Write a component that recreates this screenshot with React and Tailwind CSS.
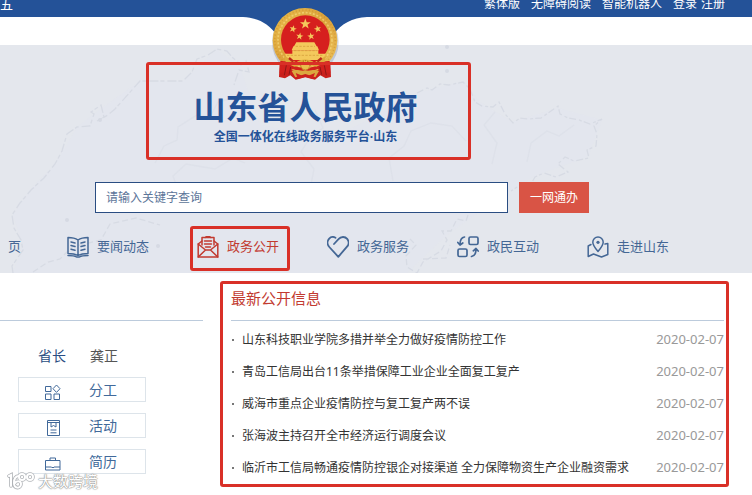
const topLinks = ["繁体版", "无障碍阅读", "智能机器人"];

const news = [
  { title: "山东科技职业学院多措并举全力做好疫情防控工作", date: "2020-02-07" },
  { title: "青岛工信局出台11条举措保障工业企业全面复工复产", date: "2020-02-07" },
  { title: "威海市重点企业疫情防控与复工复产两不误", date: "2020-02-07" },
  { title: "张海波主持召开全市经济运行调度会议", date: "2020-02-07" },
  {
    title: "临沂市工信局畅通疫情防控银企对接渠道 全力保障物资生产企业融资需求",
    date: "2020-02-07",
  },
];

const NavIcon = ({ children }) => (
  <svg
    viewBox="0 0 22 22"
    className="h-[22px] w-[22px] shrink-0"
    fill="none"
    stroke="currentColor"
    strokeWidth="1.5"
    strokeLinejoin="round"
    strokeLinecap="round"
    aria-hidden="true"
  >
    {children}
  </svg>
);

const BookIcon = () => (
  <NavIcon>
    <path d="M11 4C8 2 4.500 1.600 1 1.600V17.400C4.500 17.400 8 17.800 11 19.400C14 17.800 17.500 17.400 21 17.400V1.600C17.500 1.600 14 2 11 4ZM11 4V19" />
    <path d="M1 19.600C5 19.600 8 20 9.500 21H12.500C14 20 17 19.600 21 19.600" />
    <path d="M4 6L8 7M4 9.600L8 10.600M4 13.200L8 14.200M18 6L14 7M18 9.600L14 10.600M18 13.200L14 14.200" />
  </NavIcon>
);

const MailIcon = () => (
  <NavIcon>
    <path d="M5 9V1.600H17V9M8 1.600L9 .8H13L14 1.600" />
    <path d="M5 5L1.200 8V21H20.800V8L17 5" />
    <path d="M1.200 8L8.500 14H13.500L20.800 8M1.200 21L8.500 14M20.800 21L13.500 14" />
    <path d="M7.500 5H14.500M7.500 8H14.500M8.500 11H13.500" />
  </NavIcon>
);

const HeartIcon = () => (
  <NavIcon>
    <path
      strokeWidth="1.800"
      d="M7 8L11.500 3.200C14 .3 18 .3 20.200 2.900C22.100 5.300 21.900 8.600 20 10.700L11.300 20.800L2.300 11C-.1 8.300 .2 4.800 2.200 2.600C4 .7 6.500 .6 8.500 1.700"
    />
  </NavIcon>
);

const ExchangeIcon = () => (
  <NavIcon>
    <g strokeWidth="1.700">
      <rect x="12" y="1" width="9" height="7.500" rx="1.500" />
      <rect x="1" y="13" width="9" height="7.500" rx="1.500" />
      <path d="M7.500 1C4.500 1.500 3 4 3 8.500M.8 6.500L3 9L5.800 7" />
      <path d="M14.500 20.500C17.500 20 19 17.500 19 13M16.300 14.800L19 12.500L21.200 15" />
    </g>
  </NavIcon>
);

const MapIcon = () => (
  <NavIcon>
    <path d="M11 15.500C8 12 5.800 9.500 5.800 6.300C5.800 3.200 8.200 1 11 1C13.800 1 16.200 3.200 16.200 6.300C16.200 9.500 14 12 11 15.500Z" />
    <circle cx="11" cy="6.300" r="1.600" fill="currentColor" stroke="none" />
    <path d="M4 8.500L1.200 10V20.500L6.500 18L14.500 21L20.800 18.500V7.500L18 8" />
  </NavIcon>
);

const navItems = [
  { label: "要闻动态", icon: BookIcon },
  { label: "政务公开", icon: MailIcon, active: true },
  { label: "政务服务", icon: HeartIcon },
  { label: "政民互动", icon: ExchangeIcon },
  { label: "走进山东", icon: MapIcon },
];

const SideIcon = ({ children }) => (
  <svg
    viewBox="0 0 16 16"
    className="mt-1 h-4 w-4 shrink-0"
    fill="none"
    stroke="currentColor"
    strokeWidth="1"
    aria-hidden="true"
  >
    {children}
  </svg>
);

const sideItems = [
  {
    label: "分工",
    icon: (
      <SideIcon>
        <path d="M.5 2.500H6V7.500H.5ZM.5 10H6V15.500H.5ZM9 10H14.500V15.500H9ZM11.500 1L15 4.700L11.500 8.400L8 4.700Z" />
      </SideIcon>
    ),
  },
  {
    label: "活动",
    icon: (
      <SideIcon>
        <path d="M2.500 .5H14.500V15.500H2.500ZM2.500 2.500H14.500M6 2.500V7L8.500 5.500L11 7V2.500M5.500 10H11.500M5.500 12.800H11.500" />
      </SideIcon>
    ),
  },
  {
    label: "简历",
    icon: (
      <SideIcon>
        <path d="M.5 4.500H15V14H.5ZM5 4.500V2H10.500V4.500M.5 11H6.500M9 11H15M6.500 11.500H9" />
      </SideIcon>
    ),
  },
];

const star = "M0 -10L2.400 -3.200L9.500 -3.100L3.800 1.200L5.900 8.100L0 4L-5.900 8.100L-3.800 1.200L-9.500 -3.100L-2.400 -3.200Z";

const Emblem = () => (
  <svg
    viewBox="0 0 240 225"
    className="absolute left-[265px] top-[5px] h-[75px] w-20"
    role="img"
    aria-label="国徽"
  >
    <defs>
      <linearGradient id="gold" x1="0" y1="0" x2="1" y2="1">
        <stop offset="0" stopColor="#e9bd4c" />
        <stop offset="0.5" stopColor="#dba13a" />
        <stop offset="1" stopColor="#efc65c" />
      </linearGradient>
    </defs>
    <ellipse cx="121" cy="111" rx="100" ry="102" fill="#1e3a6b" opacity="0.18" />
    <path d="M44 172L42 216L60 220L76 211L92 224L121 217L150 224L166 211L182 220L198 216L196 172Z" fill="#c9201c" />
    <ellipse cx="120" cy="106" rx="97" ry="97" fill="url(#gold)" />
    <ellipse cx="120" cy="106" rx="91" ry="91" fill="none" stroke="#c58a2a" strokeWidth="5" strokeDasharray="3 7" opacity="0.5" />
    <ellipse cx="120" cy="105" rx="81" ry="82" fill="none" stroke="#f8df86" strokeWidth="5" strokeDasharray="6 5" opacity="0.6" />
    <circle cx="121" cy="104" r="73" fill="#d61f1e" />
    <g fill="#f4c95c">
      <path d={star} transform="translate(121 57) scale(1.7)" />
      <path d={star} transform="translate(84 72) rotate(15) scale(1.15)" />
      <path d={star} transform="translate(158 72) rotate(-15) scale(1.15)" />
      <path d={star} transform="translate(104 94) rotate(10) scale(1.15)" />
      <path d={star} transform="translate(138 94) rotate(-10) scale(1.15)" />
      <path d="M94 112H148L155 124H87ZM85 124H157L162 136H80Z" />
      <path d="M82 136H160V146H82ZM60 146H182L174 165H67Z" />
    </g>
    <path d="M92 124H150M87 137H155M66 151H176" stroke="#d09736" strokeWidth="2" strokeDasharray="7 4" />
    <path d="M46 168C68 166 76 178 92 184C110 190 132 190 150 184C166 178 174 166 194 168L196 204L178 202L158 192L121 205L84 192L64 202L44 204Z" fill="#d1211d" />
    <path d="M56 153C72 158 80 170 92 173C108 160 133 160 149 173C162 170 170 158 184 153L177 174L154 185L121 176L88 185L64 174Z" fill="#deab3d" />
    <path d="M85 170L72 159M157 170L170 159" stroke="#bd2a1b" strokeWidth="7" />
    <circle cx="121" cy="181" r="14" fill="#e9bd4c" stroke="#bd7520" strokeWidth="4" strokeDasharray="4 3" />
    <path d="M64 181L58 211M77 186L72 209M165 186L170 209M178 181L184 211" stroke="#8f1716" strokeWidth="3" />
    <path d="M80 198C97 190 105 200 121 196C137 200 145 190 162 198L151 217L121 207L91 217Z" fill="#dba83f" />
    <path d="M92 204L121 216L150 204L143 222L121 215L99 222Z" fill="#cf221d" />
  </svg>
);

const MapBackdrop = () => (
  <svg
    viewBox="0 0 752 228"
    className="pointer-events-none absolute left-0 top-0 h-[228px] w-[752px]"
    fill="none"
    stroke="#d7dbe4"
    strokeWidth="1.3"
    aria-hidden="true"
  >
    <path
      fill="#e2e6ee"
      stroke="none"
      opacity="0.7"
      d="M55 119L77 82L95 68L140 36L183 36L217 4L240 22L260 80L330 95L417 48L463 36L480 57L512 77L558 63L602 75L588 112L537 130L510 145L447 190L407 228H13L23 200L13 170L30 145Z"
    />
    <path
      strokeDasharray="9 2 4 3"
      d="M13 228L12 221L23 205L21 195L14 183L12 170L20 158L31 145L44 133L55 119L62 106L67 89L77 82L90 81L94 69L91 67L101 60L104 72L97 76L108 70L115 64L140 36L183 36L192 27L197 14L208 10L217 4L227 6L232 12L241 20L246 16L249 27L239 25L234 40"
    />
    <path
      strokeDasharray="7 3 3 2"
      d="M417 48L427 43L432 45L440 39L449 40L463 37L470 44L475 57L482 61L493 62L499 57L505 69L513 78L520 73L528 74L541 73L551 66L558 61L560 69L568 73L579 75L590 79L602 74L594 81L597 89L596 101L587 105L589 113L574 116L565 112L558 119L568 127L556 132L544 128L535 132L531 139L520 140L511 146"
    />
    <path
      strokeDasharray="6 3"
      d="M468 170L466 176L457 174L451 186L442 186L447 195L441 206L423 217L417 228L407 222L406 211L416 200L410 194M423 214L446 213L450 200M33 227L48 217L60 214L72 202L101 195L110 179L136 173L160 180"
    />
    <path
      opacity="0.45"
      d="M155 118L164 101L177 95L178 82L197 70L210 72L218 57L244 50M178 145L173 131L186 119L215 124L233 113L245 118M310 145L314 124L301 107L311 91L323 83L315 65M393 136L389 113L404 101L411 86L431 78L452 81L466 96M492 119L497 98L484 80L495 67M527 117L531 98L547 86L559 91L574 80"
    />
    <g fill="#d6dae3" stroke="none">
      <circle cx="67" cy="175" r="2" />
      <circle cx="100" cy="75" r="2" />
      <circle cx="158" cy="201" r="2" />
      <circle cx="447" cy="2" r="2" />
      <circle cx="447" cy="26" r="2" />
    </g>
  </svg>
);

const Watermark = () => (
  <div className="absolute bottom-1 left-[7px] flex items-center gap-[3px]">
    <svg viewBox="0 0 28 18" className="h-[18px] w-7" fill="none" aria-hidden="true">
      <g stroke="#b0b3b7" strokeWidth="3.6" strokeLinecap="round">
        <path d="M2 4L4 3V14M12 4C8 4 7 8 7 11C7 17 14 17 14 12C14 8 9 9 8 11" />
        <circle cx="15" cy="5" r="3" />
        <circle cx="23" cy="5" r="3" />
      </g>
      <g stroke="#fff" strokeWidth="2" strokeLinecap="round">
        <path d="M2 4L4 3V14M12 4C8 4 7 8 7 11C7 17 14 17 14 12C14 8 9 9 8 11" />
        <circle cx="15" cy="5" r="3" />
        <circle cx="23" cy="5" r="3" />
      </g>
    </svg>
    <span className="text-[15px] leading-5 text-white [text-shadow:0_0_1px_#888,0_0_1px_#888,0_0_2px_#aaa]">
      大数跨境
    </span>
  </div>
);

const App = () => {
  return (
    <div className="relative min-h-screen overflow-hidden bg-white font-['Noto_Sans','Noto_Sans_CJK_SC',sans-serif] text-xs text-[#333]">
      <header className="relative">
        <div className="flex h-[17px] items-end justify-between bg-[#245298] pb-1 pr-[27px] leading-[18px] text-white">
          <span className="text-[13px]">五</span>
          <div className="flex gap-[11px]">
            {topLinks.map((label) => (
              <a key={label} href="#">
                {label}
              </a>
            ))}
            <span className="flex gap-1">
              <a href="#">登录</a>
              <a href="#">注册</a>
            </span>
          </div>
        </div>
        <div className="h-7" />

        <div className="relative bg-[#e4e7ed] pb-[2px] pt-[17px]">
          <MapBackdrop />
          {/* Site name */}
          <div className="relative z-10 ml-[146px] w-[325px] rounded-[3px] border-3 border-[#d93027] pb-[10px] pr-[6px] pt-[22px] text-center font-bold text-[#245298]">
            <h1 className="text-[32px] leading-10">山东省人民政府</h1>
            <p className="leading-5">全国一体化在线政务服务平台·山东</p>
          </div>

          <form
            className="relative ml-[95px] mt-[22px] flex gap-[11px]"
            onSubmit={(e) => e.preventDefault()}
          >
            <input
              type="text"
              aria-label="请输入关键字查询"
              placeholder="请输入关键字查询"
              className="h-[31px] w-[413px] border border-[#2a4d82] bg-white px-[10px] outline-none placeholder:text-[#5c7599]"
            />
            <button type="submit" className="h-[31px] w-[70px] bg-[#d95445] text-white">
              一网通办
            </button>
          </form>

          <nav className="relative mt-[13px] flex items-center gap-[30px] text-[13px] text-[#446795]">
            <a href="#" className="w-[30px] shrink-0 pb-[3px] pl-2">
              页
            </a>
            {navItems.map(({ label, icon: Icon, active }) => (
              <a
                key={label}
                href="#"
                className={`flex h-[45px] w-[100px] shrink-0 items-center gap-2 rounded-[3px] border-3 pb-[3px] pl-1 ${
                  active ? "border-[#d93027] text-[#c23a30]" : "border-transparent"
                }`}
              >
                <Icon />
                <span className="whitespace-nowrap">{label}</span>
              </a>
            ))}
          </nav>
        </div>

        {/* Blue notch behind the emblem */}
        <svg
          viewBox="0 0 124 28"
          className="absolute left-[243px] top-4 h-7 w-[124px]"
          aria-hidden="true"
        >
          <path d="M0 0V1C15 2 25 7 34 19L44 28H80L90 19C99 7 109 2 124 1V0Z" fill="#245298" />
        </svg>
        <Emblem />
      </header>

      <main className="flex items-start">
        <aside className="w-[203px] shrink-0">
          <div className="h-12 border-b border-[#bccbdc]" />
          <div className="mt-[25px] flex gap-6 pl-[38px] text-sm leading-5">
            <span className="text-[#2a4d82]">省长</span>
            <span className="text-[#555]">龚正</span>
          </div>
          <ul className="ml-[18px] mt-[11px] flex w-32 flex-col gap-[11px]">
            {sideItems.map(({ label, icon }) => (
              <li key={label}>
                <a
                  href="#"
                  className="flex h-[25px] items-center gap-7 border border-[#dde4ea] pl-[26px] text-sm leading-5 text-[#41699a]"
                >
                  {icon}
                  {label}
                </a>
              </li>
            ))}
          </ul>
        </aside>

        <section className="ml-[17px] mr-[23px] mt-2 min-w-0 flex-1 rounded-[3px] border-3 border-[#d93027] pl-2 pr-[2px]">
          <h2 className="border-b border-[#bccbdc] pb-[10px] pt-[2px] text-[15px] leading-6 text-[#c23a30]">
            最新公开信息
          </h2>
          <ul className="pt-[3px]">
            {news.map(({ title, date }) => (
              <li key={title} className="flex h-8 items-center whitespace-nowrap">
                <span className="ml-px mr-2 h-[2px] w-[2px] bg-[#777]" />
                <a href="#">{title}</a>
                <time className="ml-auto text-[13px] text-[#999]">{date}</time>
              </li>
            ))}
          </ul>
        </section>
      </main>

      <Watermark />
    </div>
  );
};

export default App;
